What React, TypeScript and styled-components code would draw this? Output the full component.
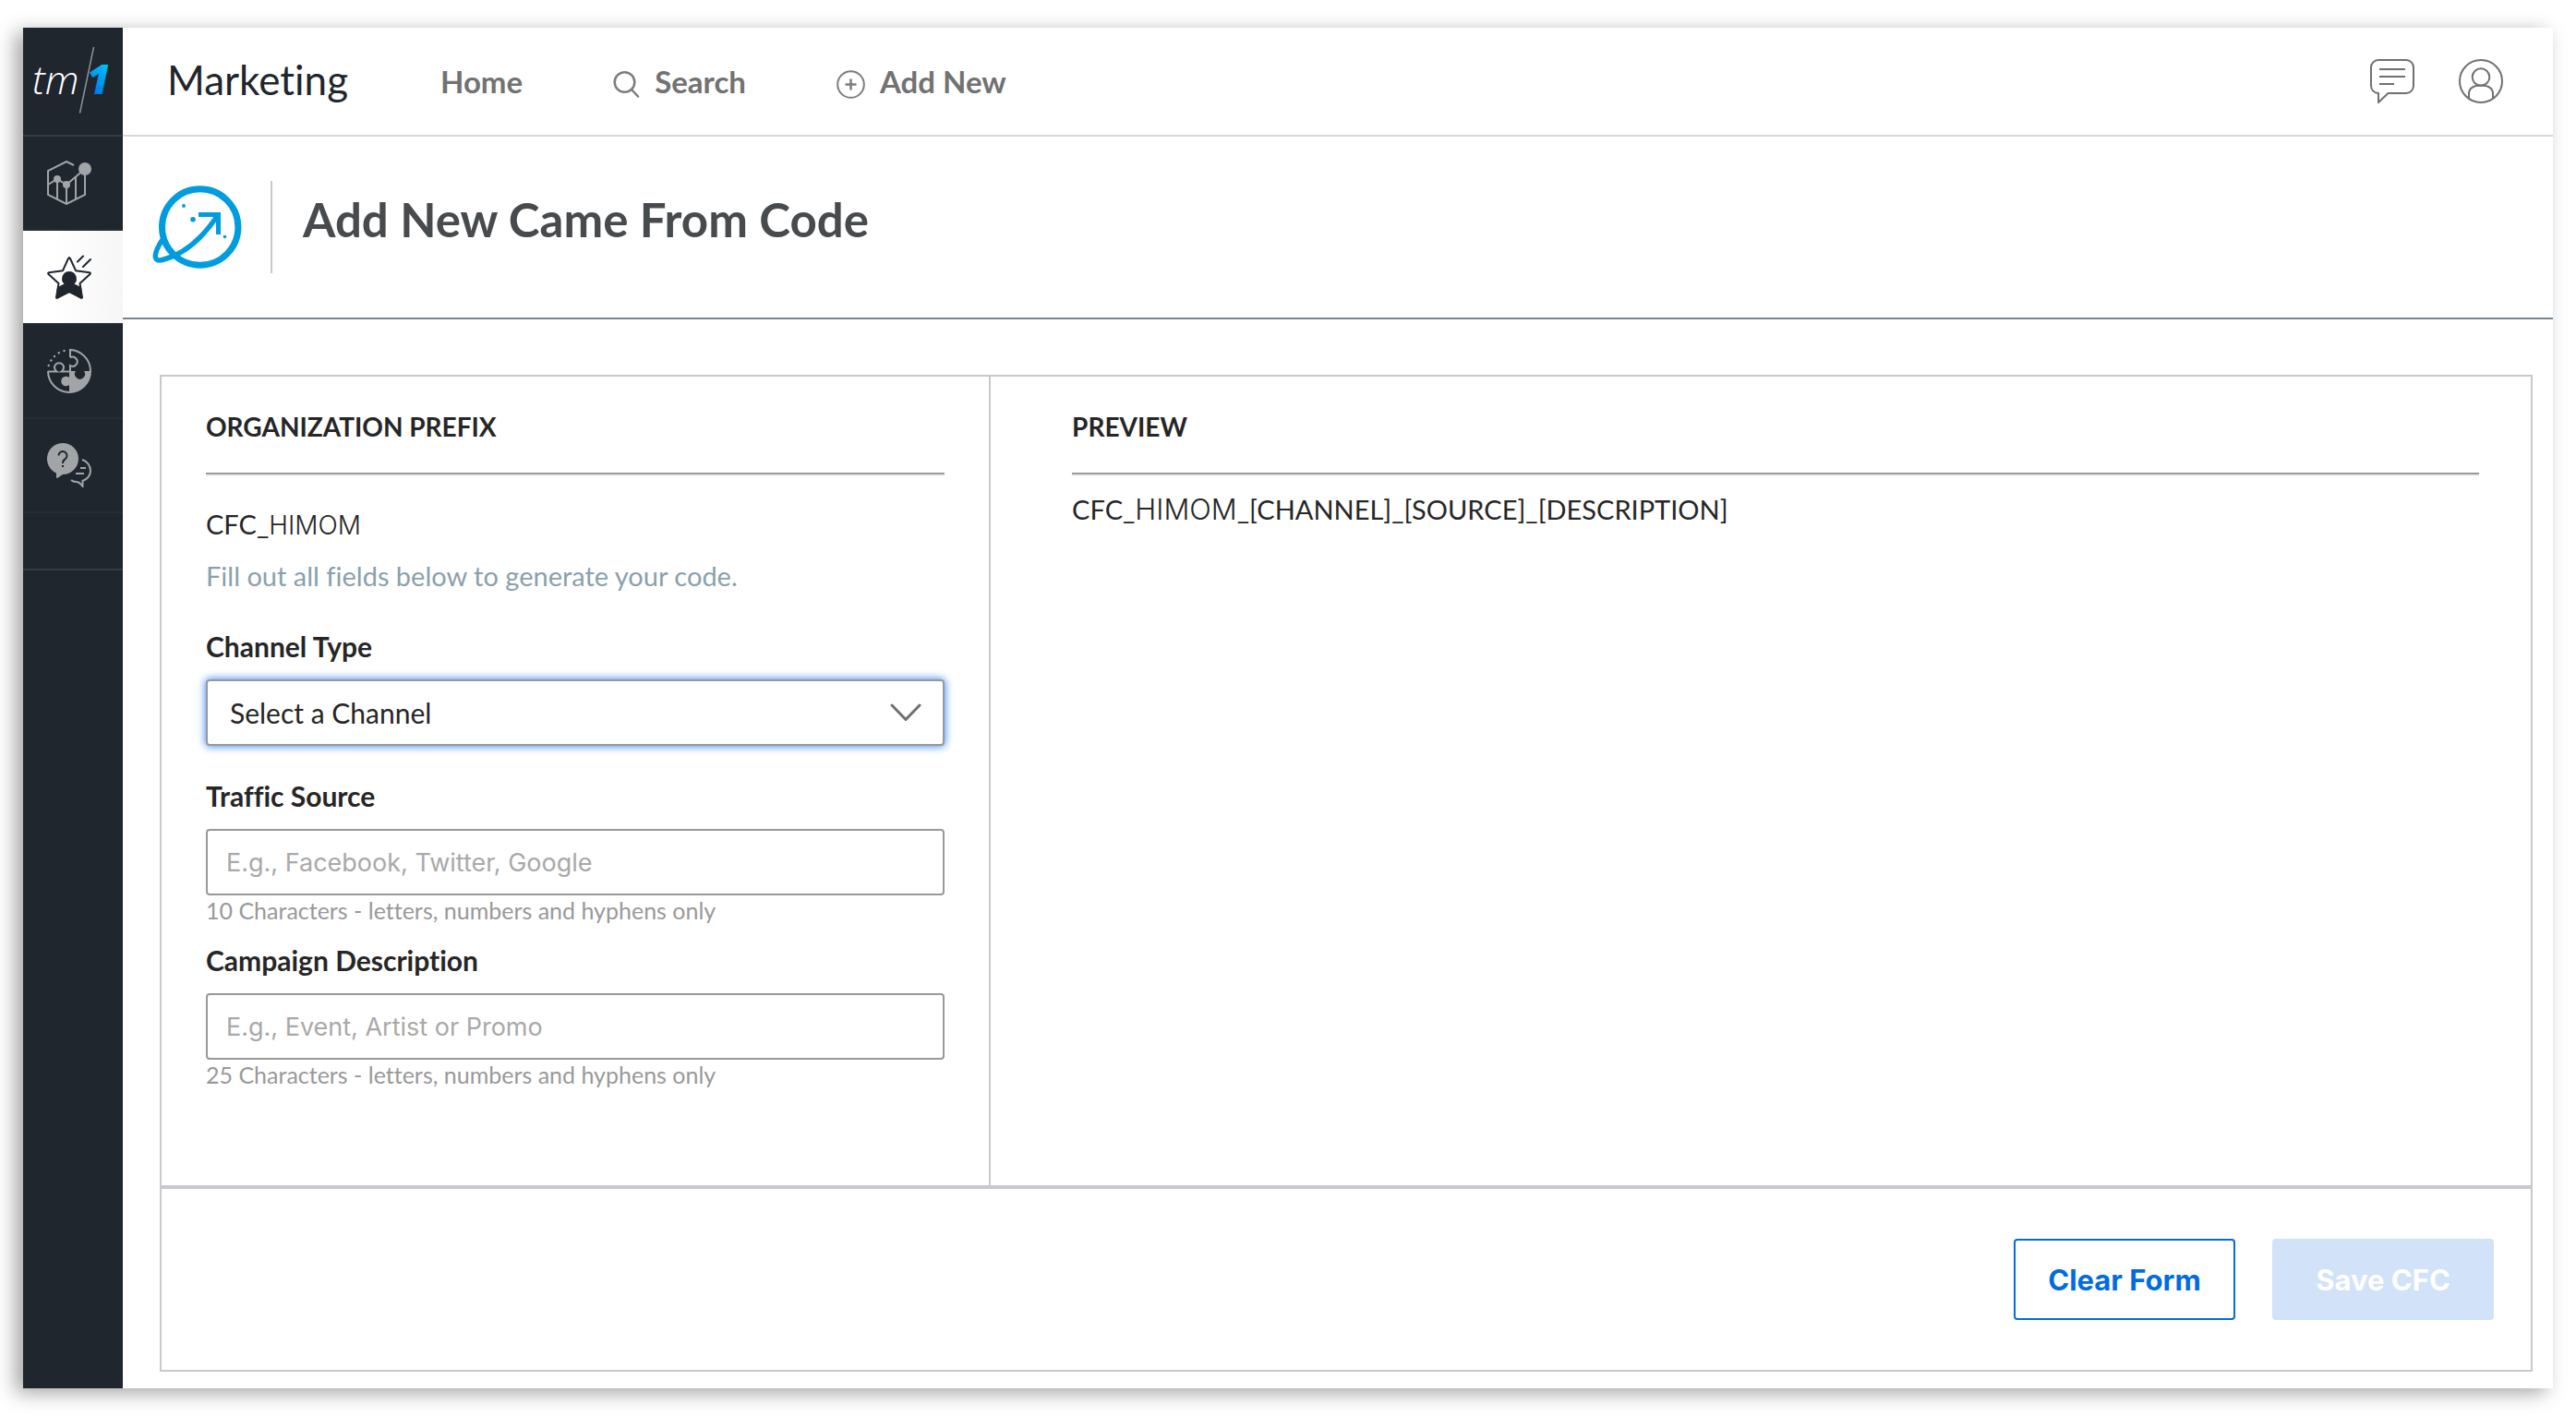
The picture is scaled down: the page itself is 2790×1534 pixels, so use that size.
import React from "react";
import styled, { createGlobalStyle } from "styled-components";

const brand = `Lato, "Open Sans", sans-serif`;
const system = `Inter, "Liberation Sans", sans-serif`;

const GlobalStyle = createGlobalStyle`
  *, *::before, *::after { box-sizing: border-box; }
  body {
    margin: 0;
    background: #fff;
    color: #262626;
    font-family: ${brand};
    font-variant-ligatures: none;
  }
`;

const Page = styled.div`
  min-height: 100vh;
  padding: 30px 25px;
  display: flex;
`;

const Frame = styled.div`
  flex: 1;
  display: flex;
  background: #fff;
  box-shadow: -8px 5px 20px rgba(0, 0, 0, 0.36);
`;

const Sidebar = styled.nav`
  flex: 0 0 108px;
  background: #1f262d;
`;

const Logo = styled.a`
  display: block;
  height: 118px;
  border-bottom: 2px solid #323a43;
  svg { display: block; }
`;

const SideItem = styled.a<{ $active?: boolean }>`
  display: block;
  height: 102px;
  padding: 26px;
  border-bottom: 2px solid #242c34;
  color: ${(p) => (p.$active ? "#1f262d" : "#a1a5a8")};
  background: ${(p) => (p.$active ? "linear-gradient(90deg, #fff 30%, #f6f6f6)" : "none")};
  background-clip: padding-box;
  svg { display: block; width: 48px; height: 48px; }
`;

const SideEnd = styled.div`
  height: 62px;
  border-bottom: 2px solid #323a43;
`;

const Main = styled.main`
  flex: 1;
  min-width: 0;
  display: flex;
  flex-direction: column;
`;

const TopBar = styled.header`
  height: 118px;
  padding: 0 54px 0 48px;
  display: flex;
  align-items: center;
  border-bottom: 2px solid #d9d9d9;
`;

const AppName = styled.div`
  width: 296px;
  padding-bottom: 4px;
  font-size: 44px;
  line-height: 56px;
  font-weight: 400;
  color: #1f262d;
`;

const TopLinks = styled.div`
  display: flex;
  gap: 98px;
  flex: 1;
`;

const TopLink = styled.a`
  display: flex;
  align-items: center;
  gap: 16px;
  font-size: 33px;
  line-height: 40px;
  font-weight: 700;
  color: #727272;
  text-decoration: none;
  svg { margin-top: 6px; }
`;

const TopActions = styled.div`
  display: flex;
  gap: 48px;
`;

const IconButton = styled.button`
  width: 48px;
  height: 48px;
  padding: 0;
  border: 0;
  background: none;
  color: #707070;
  svg { display: block; }
`;

const TitleBar = styled.div`
  height: 198px;
  padding: 48px 31px;
  display: flex;
  border-bottom: 2px solid #768692;
`;

const TitleIcon = styled.div`
  height: 100px;
  padding: 4px 31px 4px 0;
  border-right: 2px solid #c8c8cd;
  svg { display: block; }
`;

const Title = styled.h1`
  margin: 0;
  padding: 12px 33px;
  font-size: 51px;
  line-height: 60px;
  font-weight: 700;
  color: #484b4e;
`;

const Card = styled.form`
  flex: 1;
  margin: 60px 22px 18px 40px;
  display: flex;
  flex-direction: column;
  border: 2px solid #c8c8cd;
`;

const Columns = styled.div`
  flex: 1;
  display: flex;
`;

const FormColumn = styled.section`
  width: 35%;
  padding: 36px 48px;
  border-right: 2px solid #c8c8cd;
`;

const PreviewColumn = styled.section`
  flex: 1;
  padding: 36px 56px 36px 88px;
`;

const Heading = styled.h2`
  margin: 0;
  font-size: 28px;
  line-height: 36px;
  font-weight: 700;
`;

const Rule = styled.hr`
  margin: 32px 0 18px;
  border: 0;
  border-top: 2px solid #999;
  border-bottom: 2px solid #eee;
`;

const Text = styled.p`
  margin: 0;
  font-size: 29px;
  line-height: 36px;
`;

const Prefix = styled(Text)`
  margin-top: 34px;
`;

const Org = styled.span<{ $large?: boolean }>`
  font-family: ${system};
  font-weight: 300;
  font-size: ${(p) => (p.$large ? 31 : 28)}px;
  line-height: 1;
`;

const Hint = styled(Text)`
  margin: 20px 0 40px;
  color: #8aa1ab;
`;

const Field = styled.div<{ $gap: number }>`
  margin-bottom: ${(p) => p.$gap}px;
`;

const Label = styled.label`
  display: block;
  margin-bottom: 18px;
  font-size: 30px;
  line-height: 36px;
  font-weight: 700;
`;

const SelectWrap = styled.div`
  display: grid;
  align-items: center;
  > * { grid-area: 1 / 1; }
  svg { justify-self: end; margin-right: 25px; pointer-events: none; }
`;

const Select = styled.select`
  width: 100%;
  height: 72px;
  padding: 0 24px;
  appearance: none;
  border: 2px solid #999;
  border-radius: 4px;
  outline: 0;
  background: #fff;
  box-shadow: 0 0 9px 1px #4a8ff5;
  font-family: ${brand};
  font-size: 30px;
  color: #262626;
`;

const Input = styled.input`
  display: block;
  width: 100%;
  height: 72px;
  padding: 0 20px;
  border: 2px solid #999;
  border-radius: 4px;
  background: #fff;
  font-family: ${system};
  font-size: 27px;
  &::placeholder { color: #a9a9a9; opacity: 1; }
`;

const Help = styled.div`
  font-size: 25px;
  line-height: 32px;
  color: #999;
`;

const Footer = styled.footer`
  display: flex;
  justify-content: flex-end;
  gap: 40px;
  padding: 54px 40px;
  border-top: 4px solid #c8c8cd;
`;

const Button = styled.button<{ $primary?: boolean }>`
  width: 240px;
  height: 88px;
  padding: 0;
  border: 2px solid ${(p) => (p.$primary ? "#d2e2f9" : "#026cdf")};
  border-radius: 4px;
  background: ${(p) => (p.$primary ? "#d2e2f9" : "#fff")};
  color: ${(p) => (p.$primary ? "#fff" : "#026cdf")};
  font-family: ${system};
  font-size: 31px;
  font-weight: 700;
`;

const LogoMark = () => (
  <svg width="108" height="116" viewBox="0 0 108 116" aria-hidden="true">
    <defs>
      <linearGradient id="one" x1="0.7" y1="0" x2="0.4" y2="1">
        <stop offset="0" stopColor="#00d9ff" />
        <stop offset="1" stopColor="#0060e0" />
      </linearGradient>
    </defs>
    <text x="10" y="72" fill="#fff" fontFamily="Open Sans" fontStyle="italic" fontWeight="300" fontSize="43">tm</text>
    <path d="M76.500 21L61.500 92.500" stroke="#8f9396" strokeWidth="1.500" />
    <text x="69" y="72" fill="url(#one)" fontFamily="Open Sans" fontStyle="italic" fontWeight="800" fontSize="44">1</text>
  </svg>
);

const ChartIcon = () => (
  <svg viewBox="0 0 48 48" fill="none" stroke="currentColor" strokeWidth="2" aria-hidden="true">
    <path d="M29 5L21 1 1 11v26l20 10 20-10V12M1 26l10-6 10 6L41 9M11 20v22M21 26v21M31 18v24" />
    <g fill="currentColor" stroke="none">
      <circle cx="11" cy="20" r="4" />
      <circle cx="21" cy="26" r="4" />
      <circle cx="41" cy="9" r="7" />
    </g>
  </svg>
);

const StarIcon = () => (
  <svg viewBox="0 0 48 48" fill="none" stroke="currentColor" strokeWidth="2" strokeLinejoin="round" strokeLinecap="round" aria-hidden="true">
    <path d="M12.500 31L1.500 21Q0.500 19.500 2 19.300L17 17.200 23 4Q24 2 25 4L31 17.200 46 19.300Q47.500 19.500 46.500 21L35.500 31 38 46.500 24 40 10 46.500Z" />
    <path fill="currentColor" stroke="none" d="M24 18a8 8 0 0 1 5.500 13.700c3 1 5.500 2.300 7.500 4l1.500 11L37 48 24 41 11 48l-1.500-1.300L11 36c2-2 4.500-3.400 7.500-4.300A8 8 0 0 1 24 18Z" />
    <path d="M33 7.500L39 1.500M39 13L47 5" />
  </svg>
);

const PuzzleIcon = () => (
  <svg viewBox="0 0 48 48" fill="none" stroke="currentColor" strokeWidth="2" aria-hidden="true">
    <path d="M25 9V1a23 23 0 0 1 22 23M1 24a23 23 0 0 0 23 23" />
    <path d="M25 9.500a5 5 0 1 1 0 8.500v6M1 24.500h9.500a5 5 0 1 1 5 0H25" />
    <path fill="currentColor" stroke="none" d="M24 24h7a5.500 5.500 0 1 0 9 0h8a24 24 0 0 1-24 24v-9a5.300 5.300 0 1 1 0-8Z" />
    <g fill="currentColor" stroke="none">
      <circle cx="1.700" cy="18" r="1.200" />
      <circle cx="4.300" cy="12.500" r="1.200" />
      <circle cx="8" cy="8" r="1.200" />
      <circle cx="12.800" cy="4.200" r="1.200" />
      <circle cx="18.500" cy="2" r="1.200" />
    </g>
  </svg>
);

const HelpIcon = () => (
  <svg viewBox="0 0 48 48" fill="none" stroke="currentColor" strokeWidth="2" aria-hidden="true">
    <path fill="currentColor" stroke="none" d="M17 0a17 17 0 1 1 0 34l-6 4-1-.500V32.500A17 17 0 0 1 17 0Z" />
    <path stroke="#1f262d" d="M12.500 13.500a4.500 4.500 0 1 1 7 3.800c-1.800 1.200-2.500 2.200-2.500 4.700M17 24v2" />
    <path d="M38 18c5 1.500 9 6 9 12 0 5-3.500 9-8.500 11v6c-2-3-4-5-7-5-2 0-4-.500-5.500-2M36 27h6M31 33h9" />
  </svg>
);

const PlanetIcon = () => (
  <svg width="98" height="92" viewBox="0 0 98 92" fill="none" stroke="#009cde" aria-hidden="true">
    <circle cx="52.700" cy="46" r="41.200" strokeWidth="7" />
    <path d="M51 32.500H72.500V54" strokeWidth="5" />
    <path d="M72 33C58 54 38 75 12 81.500 1.500 84 1.500 75 13 58" strokeWidth="5.500" />
    <g fill="#009cde" stroke="none">
      <circle cx="35" cy="23" r="2" />
      <circle cx="45" cy="37.700" r="2.800" />
      <circle cx="79.500" cy="56.500" r="1.800" />
    </g>
  </svg>
);

const SearchIcon = () => (
  <svg width="29" height="30" viewBox="0 0 29 30" fill="none" stroke="#7d7d7d" strokeWidth="2.500" strokeLinecap="round" aria-hidden="true">
    <circle cx="12.500" cy="13" r="10.800" />
    <path d="M20 21l7 7.500" />
  </svg>
);

const AddIcon = () => (
  <svg width="31" height="31" viewBox="0 0 31 31" fill="none" stroke="#7d7d7d" strokeWidth="2" strokeLinecap="round" aria-hidden="true">
    <circle cx="15.500" cy="15.500" r="14.300" />
    <path d="M15.500 10.500v10M10.500 15.500h10" strokeWidth="2.500" />
  </svg>
);

const ChatIcon = () => (
  <svg width="48" height="48" viewBox="0 0 48 48" fill="none" stroke="currentColor" strokeWidth="2" aria-hidden="true">
    <path d="M9 1h30a8 8 0 0 1 8 8v20a8 8 0 0 1-8 8H19.500L9 47V37a8 8 0 0 1-8-8V9a8 8 0 0 1 8-8ZM10 11h28M10 19h28M10 27h16" />
  </svg>
);

const UserIcon = () => (
  <svg width="48" height="48" viewBox="0 0 48 48" fill="none" stroke="currentColor" strokeWidth="2" aria-hidden="true">
    <circle cx="24" cy="24" r="23" />
    <circle cx="24" cy="19.500" r="9.300" />
    <path d="M11 43v-5c0-6.500 5-9.500 13-9.500S37 31.500 37 38v5" />
  </svg>
);

const Chevron = () => (
  <svg width="34" height="20" viewBox="0 0 34 20" fill="none" stroke="#707070" strokeWidth="3" strokeLinecap="round" strokeLinejoin="round" aria-hidden="true">
    <path d="M2 2l15 15.500L32 2" />
  </svg>
);

export default function App() {
  return (
    <Page>
      <GlobalStyle />
      <Frame>
        <Sidebar>
          <Logo href="#"><LogoMark /></Logo>
          <SideItem href="#" aria-label="Reports"><ChartIcon /></SideItem>
          <SideItem href="#" aria-label="Marketing" $active><StarIcon /></SideItem>
          <SideItem href="#" aria-label="Integrations"><PuzzleIcon /></SideItem>
          <SideItem href="#" aria-label="Help"><HelpIcon /></SideItem>
          <SideEnd />
        </Sidebar>
        <Main>
          <TopBar>
            <AppName>Marketing</AppName>
            <TopLinks>
              <TopLink href="#">Home</TopLink>
              <TopLink href="#"><SearchIcon />Search</TopLink>
              <TopLink href="#"><AddIcon />Add New</TopLink>
            </TopLinks>
            <TopActions>
              <IconButton type="button" aria-label="Messages"><ChatIcon /></IconButton>
              <IconButton type="button" aria-label="Account"><UserIcon /></IconButton>
            </TopActions>
          </TopBar>
          <TitleBar>
            <TitleIcon><PlanetIcon /></TitleIcon>
            <Title>Add New Came From Code</Title>
          </TitleBar>
          <Card>
            <Columns>
              <FormColumn>
                <Heading>ORGANIZATION PREFIX</Heading>
                <Rule />
                <Prefix>CFC_<Org>HIMOM</Org></Prefix>
                <Hint>Fill out all fields below to generate your code.</Hint>
                <Field $gap={36}>
                  <Label htmlFor="channel">Channel Type</Label>
                  <SelectWrap>
                    <Select id="channel"><option>Select a Channel</option></Select>
                    <Chevron />
                  </SelectWrap>
                </Field>
                <Field $gap={20}>
                  <Label htmlFor="source">Traffic Source</Label>
                  <Input id="source" placeholder="E.g., Facebook, Twitter, Google" />
                  <Help>10 Characters - letters, numbers and hyphens only</Help>
                </Field>
                <Field $gap={0}>
                  <Label htmlFor="description">Campaign Description</Label>
                  <Input id="description" placeholder="E.g., Event, Artist or Promo" />
                  <Help>25 Characters - letters, numbers and hyphens only</Help>
                </Field>
              </FormColumn>
              <PreviewColumn>
                <Heading>PREVIEW</Heading>
                <Rule />
                <Text>CFC_<Org $large>HIMOM</Org>_[CHANNEL]_[SOURCE]_[DESCRIPTION]</Text>
              </PreviewColumn>
            </Columns>
            <Footer>
              <Button type="reset">Clear Form</Button>
              <Button type="submit" $primary disabled>Save CFC</Button>
            </Footer>
          </Card>
        </Main>
      </Frame>
    </Page>
  );
}
